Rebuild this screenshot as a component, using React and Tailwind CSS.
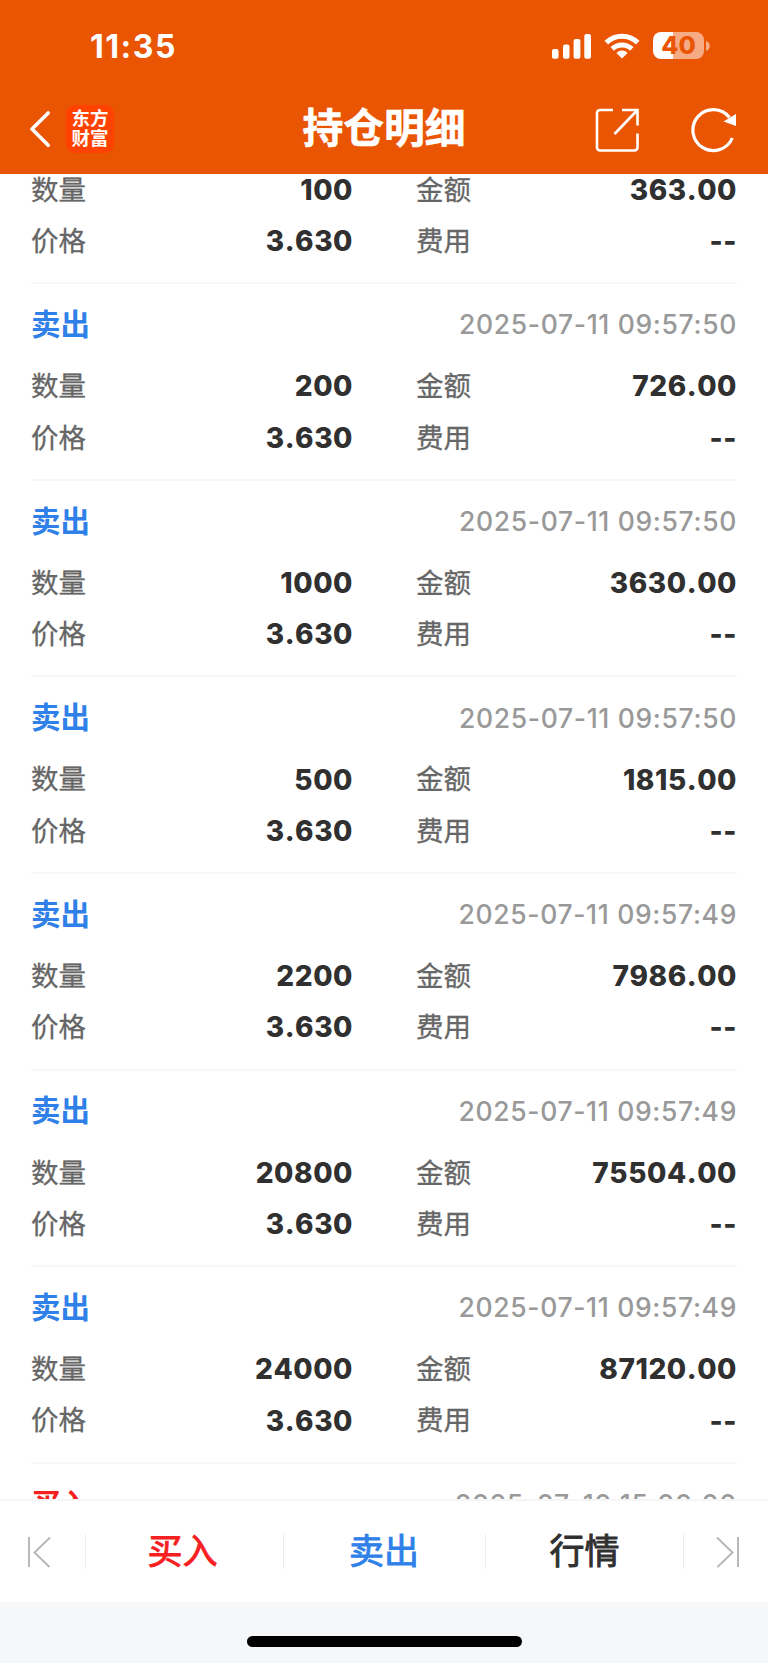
const records = [
  { side: '卖出', time: '2025-07-11 09:57:50', qty: '200', amount: '726.00' },
  { side: '卖出', time: '2025-07-11 09:57:50', qty: '1000', amount: '3630.00' },
  { side: '卖出', time: '2025-07-11 09:57:50', qty: '500', amount: '1815.00' },
  { side: '卖出', time: '2025-07-11 09:57:49', qty: '2200', amount: '7986.00' },
  { side: '卖出', time: '2025-07-11 09:57:49', qty: '20800', amount: '75504.00' },
  { side: '卖出', time: '2025-07-11 09:57:49', qty: '24000', amount: '87120.00' },
  { side: '买入', time: '2025-07-10 15:00:00', qty: '48700', amount: '176781.00' },
];

function Field({ label, value }) {
  return (
    <div className="flex h-[51.3px] items-center justify-between">
      <span className="text-[27.5px] text-[#666] [-webkit-text-stroke:0.3px_#666]">{label}</span>
      <span className="mb-px text-[28px] font-extrabold tracking-[0.55px] text-[#303030] [font-kerning:none]">{value}</span>
    </div>
  );
}

function Fields({ qty, amount }) {
  return (
    <div className="grid grid-cols-[322px_321px] gap-x-[63px]">
      <Field label="数量" value={qty} />
      <Field label="金额" value={amount} />
      <Field label="价格" value="3.630" />
      <Field label="费用" value="--" />
    </div>
  );
}

function Record({ side, time, qty, amount }) {
  return (
    <section className="h-[196.6px] shrink-0 border-t-2 border-[#f8f8f8]">
      <div className="flex h-[77px] items-center justify-between pt-[5px]">
        <span className={`mb-[2px] text-[29.5px] font-bold ${side === '买入' ? 'text-[#f72020]' : 'text-[#2f80e8]'}`}>{side}</span>
        <span className="text-[26.5px] font-medium tracking-[0.66px] text-[#999]">{time}</span>
      </div>
      <Fields qty={qty} amount={amount} />
    </section>
  );
}

function StatusBar() {
  return (
    <div className="flex h-[92px] items-center justify-between pl-[90px] pr-[58px]">
      <span className="mt-[2px] text-[32px] font-bold leading-none tracking-[1.5px] [font-kerning:none]">11:35</span>
      <div className="-mt-px flex items-center">
        <svg className="h-[26px] w-[40px]" viewBox="0 0 40 26" fill="currentColor">
          <rect x="1" y="16" width="6.5" height="9.8" rx="2" />
          <rect x="12" y="11.6" width="6.5" height="14.2" rx="2" />
          <rect x="22.6" y="6" width="6.8" height="19.8" rx="2" />
          <rect x="33.3" y="1" width="6.7" height="24.8" rx="2" />
        </svg>
        <svg className="ml-[13px] h-[26px] w-[36px]" viewBox="0 0 36 26" fill="none" stroke="currentColor" strokeWidth="5">
          <path d="M2.3 9.600a22.3 22.3 0 0 1 31.4 0" />
          <path d="M8.2 15.900a14 14 0 0 1 19.6 0" />
          <path d="M18 25.4l-5.6-5.5a8 8 0 0 1 11.2 0z" fill="currentColor" stroke="none" />
        </svg>
        <div className="ml-[13px] flex h-[27px] w-[51px] items-center justify-center rounded-[8px] bg-[linear-gradient(90deg,#fff_40%,#f6ab84_40%)] text-[25px] font-extrabold leading-none text-[#ea5504]">
          40
        </div>
        <svg className="ml-[2px] h-[10px] w-[4px]" viewBox="0 0 4 10">
          <path d="M0 0c5 1.500 5 8.500 0 10z" fill="#f6ab84" />
        </svg>
      </div>
    </div>
  );
}

function TitleBar() {
  return (
    <div className="grid h-[74px] grid-cols-[1fr_auto_1fr] items-center">
      <div className="flex items-center">
        <svg className="ml-[28px] h-[38px] w-[24px]" viewBox="0 0 24 38" fill="none" stroke="currentColor" strokeWidth="3.6" strokeLinecap="round" strokeLinejoin="round">
          <path d="M20.200 3 4 19l16.200 16.200" />
        </svg>
        <div className="ml-[14px] flex h-[48px] w-[48px] flex-col items-center justify-center rounded-[9px] bg-[#ff4200] pb-[2px] text-[18.500px] font-bold leading-[20px]">
          <span>东方</span>
          <span>财富</span>
        </div>
      </div>
      <h1 className="mb-[2px] text-[40.8px] font-bold leading-none [-webkit-text-stroke:0.6px_#fff]">持仓明细</h1>
      <div className="flex items-center justify-end pr-[30px] pt-[2px]">
        <svg className="h-[44px] w-[44px]" viewBox="0 0 44 44" fill="none" stroke="currentColor" strokeWidth="2.6">
          <path d="M18 2H5a3 3 0 0 0-3 3v34.500a3 3 0 0 0 3 3h34.500a3 3 0 0 0 3-3V25.500" />
          <path d="M27 2h15.500v15.500M42 2.500 19.500 26" />
        </svg>
        <svg className="ml-[51px] h-[46px] w-[48px]" viewBox="0 0 48 46" fill="none" stroke="currentColor" strokeWidth="3.200">
          <path d="M39.500 10.400A20.500 20.500 0 1 0 42.300 31" />
          <path d="M46 7v12L33.500 14.500z" fill="currentColor" stroke="none" />
        </svg>
      </div>
    </div>
  );
}

function SkipIcon({ flip }) {
  return (
    <svg className={`h-[32px] w-[24px] ${flip ? '-scale-x-100' : ''}`} viewBox="0 0 24 32" fill="none" stroke="#b8b8b8" strokeWidth="2">
      <path d="M2 1v30M23 1.500 7.500 16.500 22.500 31" />
    </svg>
  );
}

export default function App() {
  return (
    <div className="flex h-[1663px] w-[768px] flex-col overflow-hidden bg-white font-['Inter','Noto_Sans_CJK_SC',sans-serif]">
      <header className="h-[174px] shrink-0 bg-[#ea5504] text-white">
        <StatusBar />
        <TitleBar />
      </header>

      <main className="flex h-[1325px] shrink-0 flex-col overflow-hidden pl-[31px] pr-[31px]">
        <div className="-mt-[9.4px] h-[117.6px] shrink-0">
          <Fields qty="100" amount="363.00" />
        </div>
        {records.map((r, i) => (
          <Record key={i} {...r} />
        ))}
      </main>

      <nav className="flex h-[103px] shrink-0 items-center border-t-2 border-[#f5f5f5] text-[35px] font-normal">
        <div className="flex w-[85px] justify-start pl-[27px]">
          <SkipIcon />
        </div>
        <div className="flex h-[35px] w-[198px] items-center justify-center border-l border-[#eee] pr-[4px] text-[#f72020] [-webkit-text-stroke:0.9px_#f72020]">买入</div>
        <div className="flex h-[35px] w-[202px] items-center justify-center border-l border-[#eee] pr-px text-[#2f80e8] [-webkit-text-stroke:0.9px_#2f80e8]">卖出</div>
        <div className="flex h-[35px] w-[199px] items-center justify-center border-x border-[#eee] text-[#303030] [-webkit-text-stroke:0.9px_#303030]">行情</div>
        <div className="flex flex-1 justify-end pr-[28px]">
          <SkipIcon flip />
        </div>
      </nav>

      <footer className="flex h-[61px] shrink-0 justify-center bg-[#f6f7f9] pt-[34px]">
        <div className="h-[11px] w-[275px] rounded-full bg-black" />
      </footer>
    </div>
  );
}
